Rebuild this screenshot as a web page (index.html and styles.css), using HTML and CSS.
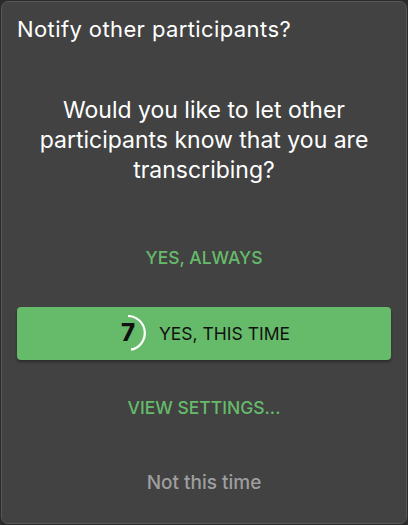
FILE: index.html
```html
<!DOCTYPE html>
<html>
<head>
<meta charset="utf-8">
<link rel="stylesheet" href="styles.css">
</head>
<body>
<div class="dialog">
  <div class="title">Notify other participants?</div>
  <div class="message">Would you like to let other participants know that you are transcribing?</div>
  <div class="actions">
    <div class="text-btn green always">YES, ALWAYS</div>
    <div class="primary-btn">
      <span class="countdown">
        <svg width="40" height="40" viewBox="0 0 40 40">
          <path d="M20 3 A17 17 0 0 1 23 36.7" fill="none" stroke="#ffffff" stroke-width="2.2"/>
        </svg>
        <span class="num">7</span>
      </span>
      <span class="label">YES, THIS TIME</span>
    </div>
    <div class="text-btn green settings">VIEW SETTINGS...</div>
    <div class="text-btn gray">Not this time</div>
  </div>
</div>
</body>
</html>
```
FILE: styles.css
```css
html, body {
  margin: 0;
  padding: 0;
  background: #2b2b2b;
}
body {
  font-family: Inter, "Open Sans", sans-serif;
}
.dialog {
  box-sizing: border-box;
  width: 406px;
  height: 523px;
  margin: 1px;
  background: #424242;
  border: 1px solid #575757;
  border-radius: 7px;
  display: flex;
  flex-direction: column;
  padding: 0 15px;
}
.title {
  color: #ffffff;
  font-size: 22px;
  letter-spacing: 0.4px;
  line-height: 28px;
  margin-top: 13px;
}
.message {
  color: #ffffff;
  font-size: 23px;
  line-height: 30px;
  text-align: center;
  margin-top: 52px;
  padding: 0 8px;
}
.actions {
  display: flex;
  flex-direction: column;
  align-items: stretch;
}
.text-btn {
  text-align: center;
  font-size: 17.5px;
  font-weight: 500;
  line-height: 24px;
}
.green { color: #66bb6a; }
.always { margin-top: 61px; }
.settings { margin-top: 36.5px; }
.gray {
  color: #9e9e9e;
  font-size: 19px;
  margin-top: 50.5px;
}
.primary-btn {
  margin-top: 36.5px;
  height: 53px;
  background: #66bb6a;
  border-radius: 4px;
  box-shadow: 0 2px 3px rgba(0,0,0,0.35);
  display: flex;
  align-items: center;
  justify-content: center;
  gap: 11px;
  padding-right: 10px;
  color: #111111;
}
.countdown {
  position: relative;
  width: 40px;
  height: 40px;
  display: flex;
  align-items: center;
  justify-content: center;
}
.countdown svg {
  position: absolute;
  left: 0;
  top: 0;
}
.num {
  font-size: 24px;
  font-weight: 800;
  line-height: 1;
}
.label {
  font-size: 17.5px;
  font-weight: 400;
}
```
